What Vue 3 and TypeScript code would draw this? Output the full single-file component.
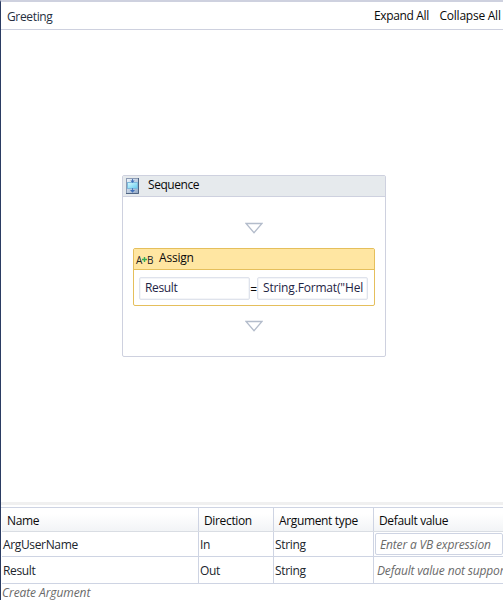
<script setup lang="ts">
interface Argument {
  name: string
  direction: string
  type: string
  hint: string
  editable: boolean
}

const args: Argument[] = [
  { name: 'ArgUserName', direction: 'In', type: 'String', hint: 'Enter a VB expression', editable: true },
  { name: 'Result', direction: 'Out', type: 'String', hint: 'Default value not supported', editable: false },
]
</script>

<template>
  <div class="designer">
    <header class="bar">
      <span class="crumb">Greeting</span>
      <span class="expand">Expand All</span>
      <span class="collapse">Collapse All</span>
    </header>

    <main class="canvas">
      <section class="sequence">
        <div class="seq-head">
          <svg class="seq-icon" width="13" height="16" viewBox="0 0 13 16">
            <defs>
              <linearGradient id="seqFill" x1="0" y1="0" x2="1" y2="1">
                <stop offset="0" stop-color="#f2f8fd" />
                <stop offset="1" stop-color="#8fa6c4" />
              </linearGradient>
              <linearGradient id="seqBox" x1="0" y1="0" x2="1" y2="1">
                <stop offset="0" stop-color="#d9fbff" />
                <stop offset="1" stop-color="#62cbef" />
              </linearGradient>
            </defs>
            <rect x=".5" y=".5" width="12" height="15" fill="url(#seqFill)" stroke="#8b9ab2" />
            <path d="M12.5 0v15.500H0" fill="none" stroke="#506583" />
            <rect x="1.500" y="4.500" width="10" height="6" fill="url(#seqBox)" stroke="#7fb9dc" />
            <path d="M6.500 1v3M6.500 10v3" stroke="#4c78bd" />
            <path d="M4.300 2.500h4.400L6.500 5zM4 12h5L6.500 14.800z" fill="#3f6fbb" />
          </svg>
          <span class="seq-title">Sequence</span>
        </div>
        <div class="seq-body">
          <svg class="drop" width="18" height="12" viewBox="0 0 18 12">
            <path d="M1 1.500h16L9 10.700z" fill="#fff" stroke="#b3bccb" stroke-width="1.300" />
          </svg>
          <div class="assign">
            <div class="assign-head">
              <span class="ab">A<svg width="5" height="5" viewBox="0 0 5 5"><path d="M0 2.500h5M2.500 0v5" stroke="#36ac54" stroke-width="1.400" /></svg>B</span>
              <span class="assign-title">Assign</span>
            </div>
            <div class="assign-body">
              <div class="field"><span class="to">Result</span></div>
              <span class="equals">=</span>
              <div class="field"><span class="value">String.Format("Hel</span></div>
            </div>
          </div>
          <svg class="drop" width="18" height="12" viewBox="0 0 18 12">
            <path d="M1 1.500h16L9 10.700z" fill="#fff" stroke="#b3bccb" stroke-width="1.300" />
          </svg>
        </div>
      </section>
    </main>

    <div class="splitter"></div>

    <section class="arguments">
      <div class="row head">
        <div class="cell">Name</div>
        <div class="cell">Direction</div>
        <div class="cell">Argument type</div>
        <div class="cell">Default value</div>
      </div>
      <div v-for="arg in args" :key="arg.name" class="row" :class="{ tall: !arg.editable }">
        <div class="cell">{{ arg.name }}</div>
        <div class="cell">{{ arg.direction }}</div>
        <div class="cell">{{ arg.type }}</div>
        <div class="cell"><span class="hint" :class="{ editor: arg.editable }">{{ arg.hint }}</span></div>
      </div>
      <div class="create">Create Argument</div>
    </section>
  </div>
</template>

<style>
body {
  margin: 0;
  overflow: hidden;
  background: #fff;
}
</style>

<style scoped>
.designer {
  box-sizing: border-box;
  width: 503px;
  height: 600px;
  display: flex;
  flex-direction: column;
  overflow: hidden;
  border-left: 1px solid #2b3c63;
  border-top: 2px solid #ced1df;
  background: #fff;
  color: #0a0a0a;
  font: 12px/16px "Open Sans", "Noto Sans", sans-serif;
  letter-spacing: -0.35px;
  white-space: nowrap;
}
.bar {
  box-sizing: border-box;
  flex: none;
  height: 28px;
  display: flex;
  padding: 6px 0 0 6px;
  border-bottom: 1px solid #ced1df;
}
.crumb {
  flex: none;
  width: 367px;
  padding-top: 1px;
  color: #26303f;
}
.expand {
  flex: none;
  width: 65.500px;
}
.collapse {
  letter-spacing: -0.24px;
}
.canvas {
  flex: none;
  height: 472px;
}
.sequence {
  box-sizing: border-box;
  width: 264px;
  height: 182px;
  margin: 145px 0 0 121px;
  border: 1px solid #ced1df;
  border-radius: 2px;
}
.seq-head {
  box-sizing: border-box;
  height: 21px;
  display: flex;
  align-items: flex-start;
  padding: 1px 0 0 3px;
  background: #e6eaed;
  border-bottom: 1px solid #ced1df;
}
.seq-icon {
  margin-top: 1px;
}
.seq-title {
  margin-left: 9px;
  letter-spacing: -0.45px;
}
.seq-body {
  display: flex;
  flex-direction: column;
  align-items: center;
  padding-top: 25px;
}
.drop {
  flex: none;
  margin-right: 1px;
}
.assign {
  box-sizing: border-box;
  width: 242px;
  height: 58px;
  margin: 14px 0;
  border: 1px solid #e5bf5c;
  border-radius: 2px;
  background: #fff;
}
.assign-head {
  box-sizing: border-box;
  height: 21px;
  display: flex;
  padding: 1px 0 0 2px;
  background: #ffe6a2;
  border-bottom: 1px solid #e5bf5c;
}
.assign-title {
  letter-spacing: -0.2px;
}
.ab {
  width: 23px;
  display: flex;
  align-items: center;
  font: 10px/20px "Open Sans", sans-serif;
  color: #222;
  letter-spacing: -0.4px;
}
.assign-body {
  display: flex;
  padding: 7px 0 0 5px;
}
.field {
  box-sizing: border-box;
  width: 111px;
  height: 23px;
  padding: 2px 5px;
  border: 1px solid #dfe3ec;
  border-radius: 2px;
  box-shadow: inset 0 0 0 .5px #e9ecf2;
  color: #1f2545;
  overflow: hidden;
}
.value {
  letter-spacing: -0.17px;
}
.equals {
  width: 7px;
  padding-top: 5px;
  text-align: center;
}
.splitter {
  flex: none;
  height: 3px;
  margin-bottom: 2px;
  background: #f0f0f0;
}
.arguments {
  padding-left: 1px;
  border-top: 1px solid #ced4e3;
}
.row {
  box-sizing: border-box;
  height: 25px;
  display: grid;
  grid-template-columns: 197px 75px 100px 160px;
  border-bottom: 1px solid #ced4e3;
  color: #20252d;
}
.row.tall {
  height: 27px;
}
.row.head {
  height: 24px;
  background: linear-gradient(#fff 25%, #f2f4f6);
  border-bottom-color: #d9dde3;
  color: #0a0a0a;
}
.cell {
  box-sizing: border-box;
  padding: 5px 0 0 1px;
  border-right: 1px solid #ced4e3;
  overflow: hidden;
}
.tall .cell {
  padding-top: 6px;
}
.head .cell {
  padding: 5px 0 0 5px;
}
.hint {
  margin-left: 2px;
  color: #6a6a6a;
  font-style: italic;
  letter-spacing: -0.16px;
}
.editor {
  display: block;
  box-sizing: border-box;
  width: 128px;
  height: 22px;
  margin: -4px 0 0 0;
  padding: 3px 0 0 4px;
  border: 1px solid #ced4e3;
  border-radius: 2px;
}
.create {
  padding-top: 1px;
  color: #6a6a6a;
  font-style: italic;
  letter-spacing: -0.08px;
}
</style>
